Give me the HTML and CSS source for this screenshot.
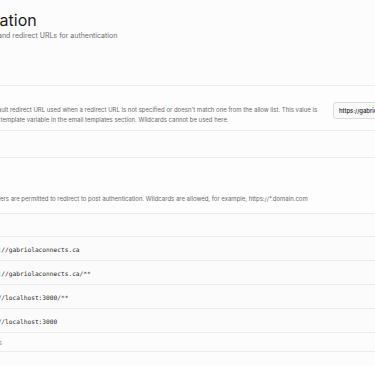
FILE: index.html
```html
<!DOCTYPE html>
<html lang="en">
<head>
    <meta charset="UTF-8">
    <meta name="viewport" content="width=device-width, initial-scale=1.0">
    <title>URL Configuration</title>
    <link rel="stylesheet" href="styles.css">
</head>
<body>
    <div class="page">
        <header class="page-header">
            <h1 class="title">URL Configuration</h1>
            <p class="subtitle">Configure site URL and redirect URLs for authentication</p>
        </header>

        <section class="panel site-panel">
            <div class="site-row">
                <p class="desc">Configure the default redirect URL used when a redirect URL is not specified or doesn't match one from the allow list. This value is<br>also exposed as a template variable in the email templates section. Wildcards cannot be used here.</p>
                <div class="url-input">https://gabriolaconnects.ca</div>
            </div>
        </section>

        <div class="gap-band"></div>

        <section class="panel redirect-panel">
            <div class="redirect-head">
                <p class="desc">URLs that auth providers are permitted to redirect to post authentication. Wildcards are allowed, for example, https://*.domain.com</p>
            </div>
            <div class="toolbar"></div>
            <ul class="url-list">
                <li class="url-row"><code>https://gabriolaconnects.ca</code></li>
                <li class="url-row"><code>https://gabriolaconnects.ca/**</code></li>
                <li class="url-row"><code>http://localhost:3000/**</code></li>
                <li class="url-row"><code>http://localhost:3000</code></li>
                <li class="url-row total"><span>Total URLs</span></li>
            </ul>
        </section>
    </div>
</body>
</html>
```

FILE: styles.css
```css
* {
    box-sizing: border-box;
    margin: 0;
    padding: 0;
}

body {
    background: #fcfcfc;
    font-family: 'Inter', 'Liberation Sans', sans-serif;
    color: #1c1c1c;
    overflow: hidden;
    width: 375px;
    height: 366px;
}

.page {
    width: 420px;
}

/* Header */
.page-header {
    height: 85px;
    padding-top: 11px;
}

.title {
    font-size: 16px;
    font-weight: 400;
    line-height: 19px;
    margin-left: -102px;
    white-space: nowrap;
}

.subtitle {
    font-size: 7px;
    line-height: 10px;
    margin-top: 1px;
    margin-left: -66px;
    color: #6f6f6f;
    white-space: nowrap;
}

.desc {
    font-size: 6px;
    line-height: 10px;
    color: #6a6a6a;
    white-space: nowrap;
}

/* Site URL panel */
.panel {
    border-top: 1px solid #ececec;
    background: #fdfdfd;
}

.site-row {
    display: flex;
    align-items: flex-start;
    height: 45px;
    border-bottom: 1px solid #ececec;
}

.site-row .desc {
    margin-top: 19px;
    margin-left: -52px;
    width: 385px;
}

.url-input {
    flex: none;
    width: 80px;
    height: 17px;
    margin-top: 16px;
    padding: 0 5px;
    border: 1px solid #dcdcdc;
    border-radius: 3px;
    background: #fafafa;
    font-size: 5.9px;
    font-weight: 500;
    line-height: 15px;
    color: #222;
    white-space: nowrap;
    overflow: hidden;
}

.gap-band {
    height: 26px;
}

/* Redirect URLs panel */
.redirect-head {
    height: 56px;
    padding-top: 36px;
    border-bottom: 1px solid #ececec;
}

.redirect-head .desc {
    margin-left: -61px;
}

.toolbar {
    height: 23px;
    background: #fcfcfc;
    border-bottom: 1px solid #ececec;
}

.url-list {
    list-style: none;
}

.url-row {
    height: 24px;
    display: flex;
    align-items: center;
    padding-top: 2px;
    border-bottom: 1px solid #ececec;
    background: #fbfbfb;
}

.url-row code {
    font-family: 'DejaVu Sans Mono', 'Liberation Mono', monospace;
    font-size: 6.2px;
    color: #2a2a2a;
    margin-left: -21px;
    white-space: nowrap;
}

.url-row.total {
    height: 19px;
    background: #fcfcfc;
}

.url-row.total span {
    font-size: 6.3px;
    color: #8a8a8a;
    margin-left: -30px;
}
```
